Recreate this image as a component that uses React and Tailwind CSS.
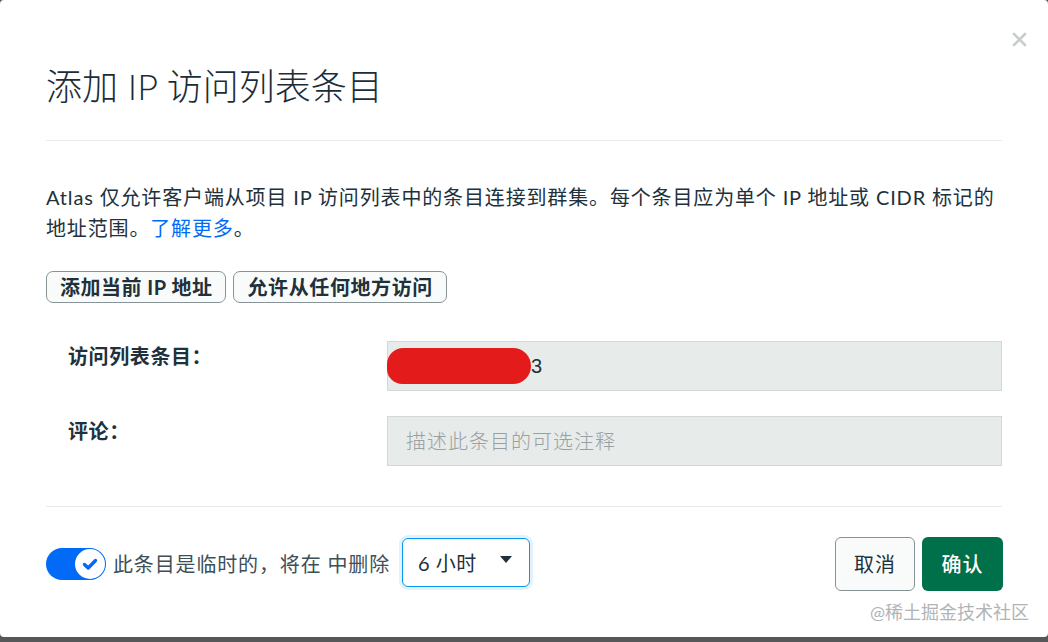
import { useState } from 'react';

const FONT = "[font-family:Lato,'Noto_Sans_CJK_SC',sans-serif]";

function CloseIcon() {
  return (
    <svg width="15" height="15" viewBox="0 0 15 15" fill="none">
      <path d="M2 2L13 13M13 2L2 13" stroke="#c9cccd" strokeWidth="2.6" strokeLinecap="round" />
    </svg>
  );
}

function Toggle({ on, onClick }) {
  return (
    <button
      onClick={onClick}
      className={`flex items-center w-[60px] h-[32px] rounded-full px-[1px] ${on ? 'bg-[#016bf8] justify-end' : 'bg-[#b8c4c2] justify-start'}`}
    >
      <span className="flex items-center justify-center w-[30px] h-[30px] rounded-full bg-white">
        {on && (
          <svg width="30" height="30" viewBox="0 0 30 30" fill="none">
            <path d="M9.5 15.5L13.2 19L20.5 11.5" stroke="#016bf8" strokeWidth="3.4" strokeLinecap="round" strokeLinejoin="round" />
          </svg>
        )}
      </span>
    </button>
  );
}

export default function App() {
  const [temporary, setTemporary] = useState(true);

  return (
    <div className={`w-[1048px] h-[642px] bg-[#555759] overflow-hidden ${FONT}`}>
      <div className="relative w-full h-[637px] bg-white rounded-[4px] px-[46px]">
        <button className="absolute top-[32px] right-[21px]">
          <CloseIcon />
        </button>

        <div className="pt-[65px] pb-[32px] border-b border-[#e8edeb]">
          <h1 className="text-[36px] leading-[43px] font-light text-[#1c2d38]">添加 IP 访问列表条目</h1>
        </div>

        <p className="mt-[41px] text-[20px] leading-[31px] tracking-[0.85px] text-[#21313c]">
          Atlas 仅允许客户端从项目 IP 访问列表中的条目连接到群集。每个条目应为单个 IP 地址或 CIDR 标记的地址范围。<a className="text-[#016bf8]">了解更多</a>。
        </p>

        <div className="flex gap-[7px] mt-[27px]">
          <button className="h-[32px] px-[13px] rounded-[7px] border border-[#889397] bg-[#f9fbfa] text-[20px] leading-[30px] tracking-[0.5px] font-bold text-[#21313c]">
            添加当前 IP 地址
          </button>
          <button className="h-[32px] px-[13px] rounded-[7px] border border-[#889397] bg-[#f9fbfa] text-[20px] leading-[30px] tracking-[0.6px] font-bold text-[#21313c]">
            允许从任何地方访问
          </button>
        </div>

        <div className="flex flex-col gap-[25px] mt-[38px] pb-[40px] border-b border-[#e8edeb]">
          <div className="flex items-start">
            <label className="w-[341px] pl-[22px] text-[20px] leading-[30px] tracking-[0.6px] font-bold text-[#21313c]">访问列表条目：</label>
            <div className="flex-1 flex items-center h-[50px] bg-[#e7ebea] border border-[#d3d7d6]">
              <span className="-ml-px w-[144px] h-[36px] rounded-[18px_20px_20px_17px] bg-[#e31b1b]"></span>
              <span className="text-[20px] text-[#21313c] [font-family:'Liberation_Sans',Arial,sans-serif]">3</span>
            </div>
          </div>
          <div className="flex items-start">
            <label className="w-[341px] pl-[22px] text-[20px] leading-[30px] tracking-[0.6px] font-bold text-[#21313c]">评论：</label>
            <div className="flex-1 flex items-center h-[50px] pl-[18px] bg-[#e7ebea] border border-[#d3d7d6]">
              <span className="text-[20px] tracking-[1px] text-[#9aa0a2] font-light">描述此条目的可选注释</span>
            </div>
          </div>
        </div>

        <div className="flex items-center justify-between pt-[30px]">
          <div className="flex items-center">
            <Toggle on={temporary} onClick={() => setTemporary(!temporary)} />
            <span className="ml-[7px] text-[20px] tracking-[0.85px] text-[#3d4f58]">此条目是临时的，将在 中删除</span>
            <div className="ml-[12px] -mt-[3px] flex items-start justify-between w-[128px] h-[49px] pl-[15px] pr-[17px] rounded-[6px] border border-[#0498ec] shadow-[0_0_0_3px_#e1f2fd] bg-white">
              <span className="mt-[9px] text-[20px] leading-[30px] tracking-[0.5px] text-[#21313c]">6 小时</span>
              <svg className="mt-[17px]" width="12" height="8" viewBox="0 0 12 8">
                <path d="M0 0H12L6 7Z" fill="#21313c" />
              </svg>
            </div>
          </div>
          <div className="flex items-center gap-[7px] -mr-px">
            <button className="w-[80px] h-[54px] rounded-[6px] border border-[#889397] bg-[#f9fbfa] text-[20px] tracking-[1px] text-[#21313c]">取消</button>
            <button className="w-[81px] h-[54px] rounded-[6px] bg-[#00704a] text-[20px] tracking-[1px] font-medium text-white">确认</button>
          </div>
        </div>

        <div className="absolute top-[600px] right-[19px] text-[18px] leading-[24px] text-[#b1b4b6]">@稀土掘金技术社区</div>
      </div>
    </div>
  );
}
